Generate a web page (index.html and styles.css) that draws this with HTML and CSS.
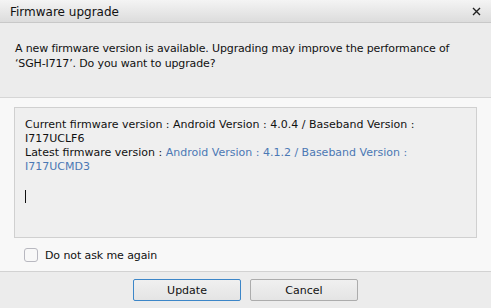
FILE: index.html
```html
<!DOCTYPE html>
<html>
<head>
<meta charset="utf-8">
<link rel="stylesheet" href="styles.css">
</head>
<body>
<div class="dialog">
  <div class="titlebar">
    <span class="title">Firmware upgrade</span>
    <span class="close" aria-label="Close">
      <svg width="9" height="9" viewBox="0 0 9 9"><path d="M1 1 L8 8 M8 1 L1 8" stroke="#222" stroke-width="1.4"/></svg>
    </span>
  </div>
  <div class="message">
    <p>A new firmware version is available. Upgrading may improve the performance of<br>‘SGH-I717’. Do you want to upgrade?</p>
  </div>
  <div class="content">
    <div class="infobox">
      <div>Current firmware version : Android Version : 4.0.4 / Baseband Version :<br>I717UCLF6</div>
      <div>Latest firmware version : <span class="hl">Android Version : 4.1.2 / Baseband Version :<br>I717UCMD3</span></div>
      <div class="caret"></div>
    </div>
    <label class="check"><span class="box"></span>Do not ask me again</label>
  </div>
  <div class="footer">
    <button class="btn primary">Update</button>
    <button class="btn">Cancel</button>
  </div>
</div>
</body>
</html>
```

FILE: styles.css
```css
html, body {
  margin: 0;
  padding: 0;
}
body {
  width: 491px;
  height: 308px;
  overflow: hidden;
  font-family: "DejaVu Sans", sans-serif;
  font-size: 11px;
  color: #111;
  background: #ececec;
}
.dialog {
  display: flex;
  flex-direction: column;
  height: 308px;
}
.titlebar {
  height: 22px;
  display: flex;
  align-items: center;
  justify-content: space-between;
  padding: 1px 10px 0 10px;
  box-sizing: border-box;
  height: 23px;
  background: linear-gradient(#f4f4f4, #dcdcdc);
  border-bottom: 1px solid #c8c8c8;
  font-size: 12px;
}
.close {
  display: flex;
  width: 9px;
  height: 9px;
}
.message {
  height: 74px;
  background: #ececec;
  border-bottom: 1px solid #d6d6d6;
  padding: 0 15px;
}
.message p {
  margin: 18px 0 0 0;
  line-height: 15px;
  letter-spacing: -0.14px;
}
.content {
  flex: 1;
  background: #f8f8f8;
  border-bottom: 1px solid #d2d2d2;
  padding: 9px 14px 0 14px;
}
.infobox {
  height: 119px;
  border: 1px solid #d0d0d0;
  background: #efefef;
  padding: 10px 10px 0 10px;
  line-height: 14px;
}
.hl {
  color: #4b78b4;
}
.caret {
  width: 1px;
  height: 13px;
  background: #111;
  margin-top: 16px;
}
.check {
  display: flex;
  align-items: center;
  margin: 10px 0 0 10px;
  letter-spacing: -0.1px;
}
.box {
  width: 12px;
  height: 12px;
  border: 1px solid #b8b8c0;
  border-radius: 3px;
  background: #f8f8f8;
  margin-right: 7px;
}
.footer {
  height: 36px;
  display: flex;
  justify-content: center;
  align-items: flex-start;
  gap: 9px;
  padding-top: 7px;
  box-sizing: border-box;
  background: #ececec;
}
.btn {
  width: 108px;
  height: 22px;
  font-family: inherit;
  font-size: 11px;
  color: #111;
  background: linear-gradient(#f0f0f0, #e4e4e4);
  border: 1px solid #acacac;
  border-radius: 2px;
  padding: 0;
}
.btn.primary {
  border-color: #3c86c8;
}
```
